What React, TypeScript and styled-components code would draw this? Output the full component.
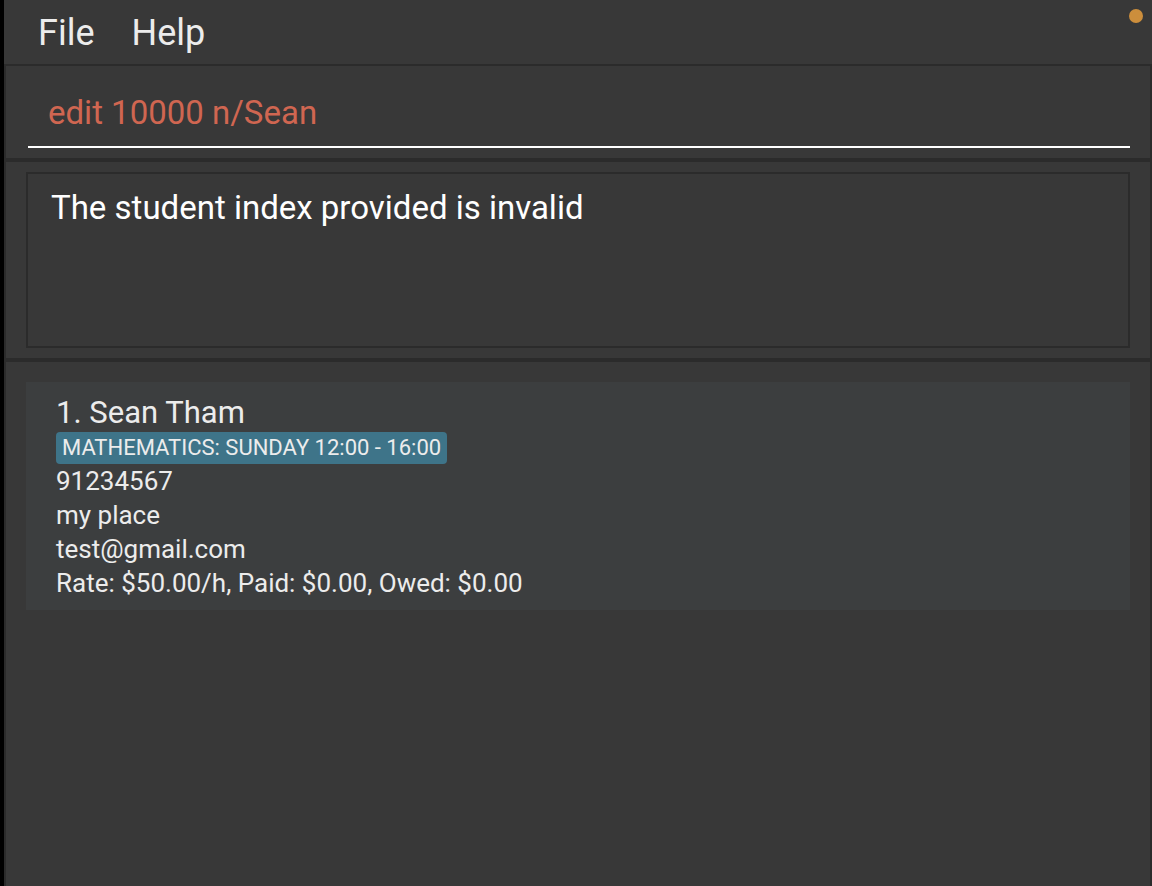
import React, { useState } from "react";
import styled, { createGlobalStyle } from "styled-components";

const GlobalStyle = createGlobalStyle`
  * { box-sizing: border-box; }
  body {
    margin: 0;
    background: #383838;
    color: #ececec;
    font-family: Roboto, "Liberation Sans", sans-serif;
  }
`;

const Window = styled.div`
  display: flex;
  flex-direction: column;
  min-height: 100vh;
  border-left: 4px solid #000000;
`;

const MenuBar = styled.nav`
  display: flex;
  align-items: flex-start;
  height: 64px;
  padding: 11px 0 0 16px;
  position: relative;
`;

const MenuButton = styled.button`
  padding: 0 19px 0 18px;
  border: 0;
  background: none;
  color: #ececec;
  font-family: inherit;
  font-size: 36px;
  line-height: 44px;
`;

const StatusDot = styled.span`
  position: absolute;
  top: 9px;
  right: 9px;
  width: 14px;
  height: 14px;
  border-radius: 50%;
  background: #cc8e3c;
`;

const Pane = styled.section<{ $top: number; $last?: boolean }>`
  flex: ${(p) => (p.$last ? "1 0 auto" : "0 0 auto")};
  padding: ${(p) => p.$top}px 20px 10px;
  border: 2px solid #2b2b2b;
  border-bottom-width: ${(p) => (p.$last ? 0 : 2)}px;
`;

const CommandInput = styled.input`
  display: block;
  width: calc(100% - 2px);
  height: 70px;
  margin-left: 2px;
  padding: 0 20px;
  border: 0;
  border-bottom: 2px solid #ffffff;
  outline: 0;
  background: none;
  color: #d06651;
  font-family: inherit;
  font-size: 33px;
`;

const ResultBox = styled.div`
  min-height: 176px;
  padding: 13px 23px;
  border: 2px solid #2b2b2b;
  color: #ffffff;
  font-size: 33px;
  line-height: 42px;
`;

const StudentList = styled.ol`
  margin: 0;
  padding: 0;
  list-style: none;
`;

const StudentCard = styled.li`
  padding: 12px 30px 10px;
  background: #3c3e3f;
`;

const Name = styled.h2`
  margin: 0;
  font-size: 31px;
  font-weight: 400;
  line-height: 38px;
`;

const Tag = styled.span`
  display: block;
  width: fit-content;
  padding: 0 6px;
  border-radius: 4px;
  background: #3e7489;
  font-size: 22px;
  line-height: 32px;
`;

const Detail = styled.p`
  margin: 0;
  font-size: 26px;
  line-height: 34px;
`;

const student = {
  name: "Sean Tham",
  tag: "MATHEMATICS: SUNDAY 12:00 - 16:00",
  details: [
    "91234567",
    "my place",
    "test@gmail.com",
    "Rate: $50.00/h, Paid: $0.00, Owed: $0.00",
  ],
};

export default function App() {
  const [command, setCommand] = useState("edit 10000 n/Sean");
  return (
    <>
      <GlobalStyle />
      <Window>
        <MenuBar>
          <MenuButton type="button">File</MenuButton>
          <MenuButton type="button">Help</MenuButton>
          <StatusDot />
        </MenuBar>
        <Pane as="form" $top={12}>
          <CommandInput
            aria-label="Command"
            spellCheck={false}
            value={command}
            onChange={(e: React.ChangeEvent<HTMLInputElement>) => setCommand(e.target.value)}
          />
        </Pane>
        <Pane $top={10}>
          <ResultBox role="status">The student index provided is invalid</ResultBox>
        </Pane>
        <Pane $top={20} $last>
          <StudentList>
            <StudentCard>
              <Name>1. {student.name}</Name>
              <Tag>{student.tag}</Tag>
              {student.details.map((line) => (
                <Detail key={line}>{line}</Detail>
              ))}
            </StudentCard>
          </StudentList>
        </Pane>
      </Window>
    </>
  );
}
